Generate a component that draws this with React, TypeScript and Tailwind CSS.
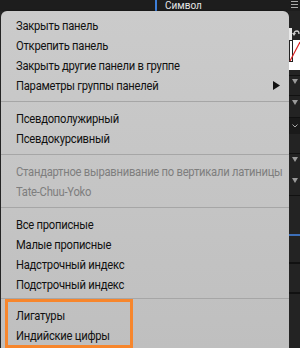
import React from "react";

type Item = { label: string; disabled?: boolean; sub?: boolean };

const groups: Item[][] = [
  [
    { label: "Закрыть панель" },
    { label: "Открепить панель" },
    { label: "Закрыть другие панели в группе" },
    { label: "Параметры группы панелей", sub: true },
  ],
  [{ label: "Псевдополужирный" }, { label: "Псевдокурсивный" }],
  [
    { label: "Стандартное выравнивание по вертикали латиницы", disabled: true },
    { label: "Tate-Chuu-Yoko", disabled: true },
  ],
  [
    { label: "Все прописные" },
    { label: "Малые прописные" },
    { label: "Надстрочный индекс" },
    { label: "Подстрочный индекс" },
  ],
];

function Label({ text }: { text: string }) {
  return (
    <span className="inline-block origin-left scale-x-[0.83] text-[13.5px] tracking-[-0.3px] whitespace-nowrap">
      {text}
    </span>
  );
}

function Row({ item }: { item: Item }) {
  return (
    <div
      className={
        "flex items-center h-[20px] pl-[15px] pr-[9px] " +
        (item.disabled ? "text-[#7e7e7e]" : "text-[#111111]")
      }
    >
      <div className="flex-1 min-w-0">
        <Label text={item.label} />
      </div>
      {item.sub && (
        <svg width="7" height="9" viewBox="0 0 7 9">
          <path d="M0 0 L7 4.5 L0 9 Z" fill="#111" />
        </svg>
      )}
    </div>
  );
}

function Sep() {
  return (
    <div className="h-[13px] flex items-center">
      <div className="h-px w-full bg-[#a6a6a6]" />
    </div>
  );
}

function Tri() {
  return (
    <svg width="6" height="5" viewBox="0 0 6 5">
      <path d="M0 0 L6 0 L3 5 Z" fill="#9a9a9a" />
    </svg>
  );
}

export default function App() {
  return (
    <div
      className="w-[300px] h-[348px] overflow-hidden bg-[#262626] flex flex-col"
      style={{ fontFamily: "Roboto, 'Liberation Sans', sans-serif" }}
    >
      {/* top bar */}
      <div className="h-[11px] flex items-center bg-[#1d1d1d]">
        <div className="ml-[155px] w-[2px] h-full bg-[#3d7fd9]" />
        <span className="ml-[8px] text-[10px] text-[#e6e6e6] leading-[11px]">Символ</span>
        <div className="ml-auto mr-[2px] flex flex-col gap-[2px] -mt-[2px]">
          <div className="w-[7px] h-px bg-[#aaa]" />
          <div className="w-[7px] h-px bg-[#aaa]" />
          <div className="w-[7px] h-px bg-[#aaa]" />
        </div>
      </div>
      <div className="flex flex-1 min-h-0">
        {/* menu */}
        <div className="w-[288px] ml-[1px] rounded-t-[6px] bg-gradient-to-b from-[#cbcbcb] to-[#bfbfbf] pt-[4px] shadow-[1px_0_2px_rgba(0,0,0,0.5)]">
          {groups.map((g, gi) => (
            <React.Fragment key={gi}>
              {g.map((it) => (
                <Row key={it.label} item={it} />
              ))}
              {gi < groups.length - 1 && <Sep />}
            </React.Fragment>
          ))}
          <div className="h-[5px] flex items-end">
            <div className="h-px w-full bg-[#a6a6a6]" />
          </div>
          <div className="ml-[4px] w-[128px] border-[3px] border-[#f7862c] pt-[3px]">
            <div className="h-[20px] flex items-center pl-[8px] text-[#111111]">
              <Label text="Лигатуры" />
            </div>
            <div className="h-[20px] flex items-center pl-[8px] text-[#111111]">
              <Label text="Индийские цифры" />
            </div>
          </div>
        </div>
        {/* right strip */}
        <div className="flex-1 flex flex-col bg-[#232323]">
          <div className="h-[17px]" />
          <div className="h-[12px] flex">
            <div className="w-[3px] bg-[#e8e8e8]" />
            <div className="flex-1 flex justify-center items-center">
              <svg width="8" height="9" viewBox="0 0 8 9">
                <path d="M2 4 Q2 1 5 1 Q7 1 7 4" stroke="#ccc" strokeWidth="1.3" fill="none" />
                <path d="M0 3 L2 6 L4 3 Z" fill="#ccc" />
              </svg>
            </div>
          </div>
          <div className="h-[22px] bg-white relative">
            <svg width="11" height="22" viewBox="0 0 11 22" className="absolute inset-0">
              <rect x="0.5" y="0.5" width="3" height="21" fill="none" stroke="#222" />
              <line x1="1" y1="21" x2="11" y2="2" stroke="#d22" strokeWidth="1.2" />
            </svg>
          </div>
          <div className="h-[8px] bg-white" />
          <div className="h-[6px] border-b border-[#111]" />
          <div className="h-[10px] flex justify-center items-center"><Tri /></div>
          <div className="h-[10px] border-b border-[#111]" />
          <div className="h-[12px] flex justify-center items-center"><Tri /></div>
          <div className="h-[10px] border-b border-[#111]" />
          <div className="h-[16px] flex justify-center items-center bg-[#1a1a1a]">
            <svg width="6" height="4" viewBox="0 0 6 4"><path d="M0.5 0.5 L3 3 L5.5 0.5" stroke="#aaa" fill="none" /></svg>
          </div>
          <div className="h-[20px] border-b border-[#111]" />
          <div className="h-[10px] flex justify-center items-center"><Tri /></div>
          <div className="h-[12px]" />
          <div className="h-[8px] flex justify-center items-center"><Tri /></div>
          <div className="h-[12px] border-b border-[#111]" />
          <div className="h-[38px]" />
          <div className="h-[2px] bg-[#3d6fb8]" />
          <div className="h-[28px] border-b-2 border-[#111]" />
          <div className="h-[30px] border-b-2 border-[#111]" />
        </div>
      </div>
    </div>
  );
}
